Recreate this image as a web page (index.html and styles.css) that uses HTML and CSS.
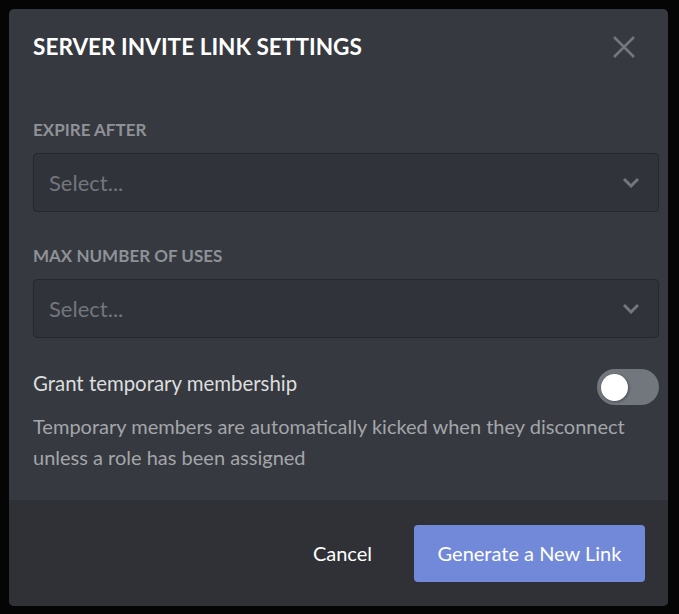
FILE: index.html
```html
<!DOCTYPE html>
<html lang="en">
<head>
    <meta charset="UTF-8">
    <title>Server Invite Link Settings</title>
    <link rel="stylesheet" href="styles.css">
</head>
<body>
    <div class="modal">
        <div class="modal-header">
            <h2 class="modal-title">Server Invite Link Settings</h2>
            <svg class="close-icon" width="24" height="24" viewBox="0 0 24 24">
                <path d="M2 2 L22 22 M22 2 L2 22" stroke="#72767d" stroke-width="2.6" fill="none"/>
            </svg>
        </div>
        <div class="modal-body">
            <div class="field">
                <div class="field-label">Expire After</div>
                <div class="select">
                    <span class="select-placeholder">Select...</span>
                    <svg class="chevron" width="18" height="11" viewBox="0 0 18 11">
                        <path d="M2 2 L9 9 L16 2" stroke="#72767d" stroke-width="3" fill="none"/>
                    </svg>
                </div>
            </div>
            <div class="field">
                <div class="field-label">Max Number of Uses</div>
                <div class="select">
                    <span class="select-placeholder">Select...</span>
                    <svg class="chevron" width="18" height="11" viewBox="0 0 18 11">
                        <path d="M2 2 L9 9 L16 2" stroke="#72767d" stroke-width="3" fill="none"/>
                    </svg>
                </div>
            </div>
            <div class="switch-row">
                <span class="switch-title">Grant temporary membership</span>
                <div class="switch"><div class="switch-knob"></div></div>
            </div>
            <p class="switch-note">Temporary members are automatically kicked when they disconnect unless a role has been assigned</p>
        </div>
        <div class="modal-footer">
            <button class="btn-link">Cancel</button>
            <button class="btn-primary">Generate a New Link</button>
        </div>
    </div>
</body>
</html>
```

FILE: styles.css
```css
* {
    margin: 0;
    padding: 0;
    box-sizing: border-box;
}
body {
    background: #050505;
    font-family: Lato, "Noto Sans", sans-serif;
    height: 614px;
    overflow: hidden;
}
.modal {
    margin: 9px 0 0 9px;
    width: 659px;
    height: 597px;
    background: #36393f;
    border-radius: 5px;
    display: flex;
    flex-direction: column;
    overflow: hidden;
}
.modal-header {
    display: flex;
    justify-content: space-between;
    align-items: flex-start;
    padding: 26px 23px 0 24px;
    height: 76px;
}
.modal-title {
    font-size: 22.6px;
    font-weight: 700;
    text-transform: uppercase;
    color: #ffffff;
    line-height: 24px;
}
.close-icon {
    margin-right: 9px;
}
.modal-body {
    flex: 1;
    padding: 35px 9px 0 24px;
}
.field + .field {
    margin-top: 34px;
}
.field-label {
    font-size: 17px;
    font-weight: 700;
    text-transform: uppercase;
    color: #8e9297;
    line-height: 20px;
    margin-bottom: 13px;
}
.select {
    height: 59px;
    background: #303339;
    border: 1px solid #26282c;
    border-radius: 4px;
    display: flex;
    align-items: center;
    justify-content: space-between;
    padding: 0 18px 0 15px;
}
.select-placeholder {
    font-size: 22px;
    color: #72767d;
}
.switch-row {
    display: flex;
    justify-content: space-between;
    align-items: flex-start;
    margin-top: 31px;
}
.switch-title {
    font-size: 20.4px;
    line-height: 28px;
    color: #dcddde;
}
.switch {
    width: 62px;
    height: 36px;
    border-radius: 18px;
    background: #72767d;
    padding: 5px 4px;
}
.switch-knob {
    width: 27px;
    height: 27px;
    border-radius: 50%;
    background: #ffffff;
    box-shadow: 1px 1px 3px rgba(0, 0, 0, 0.35);
}
.switch-note {
    margin-top: 6px;
    font-size: 20px;
    line-height: 31px;
    color: #a3a6aa;
    padding-right: 20px;
}
.modal-footer {
    height: 106px;
    background: #2f3136;
    display: flex;
    justify-content: flex-end;
    align-items: center;
    padding: 0 23px 0 0;
}
.btn-link {
    background: none;
    border: none;
    color: #ffffff;
    font-family: inherit;
    font-size: 20px;
    margin-right: 42px;
}
.btn-primary {
    background: #7289da;
    border: none;
    border-radius: 4px;
    color: #ffffff;
    font-family: inherit;
    font-size: 20px;
    width: 231px;
    height: 57px;
}
```
